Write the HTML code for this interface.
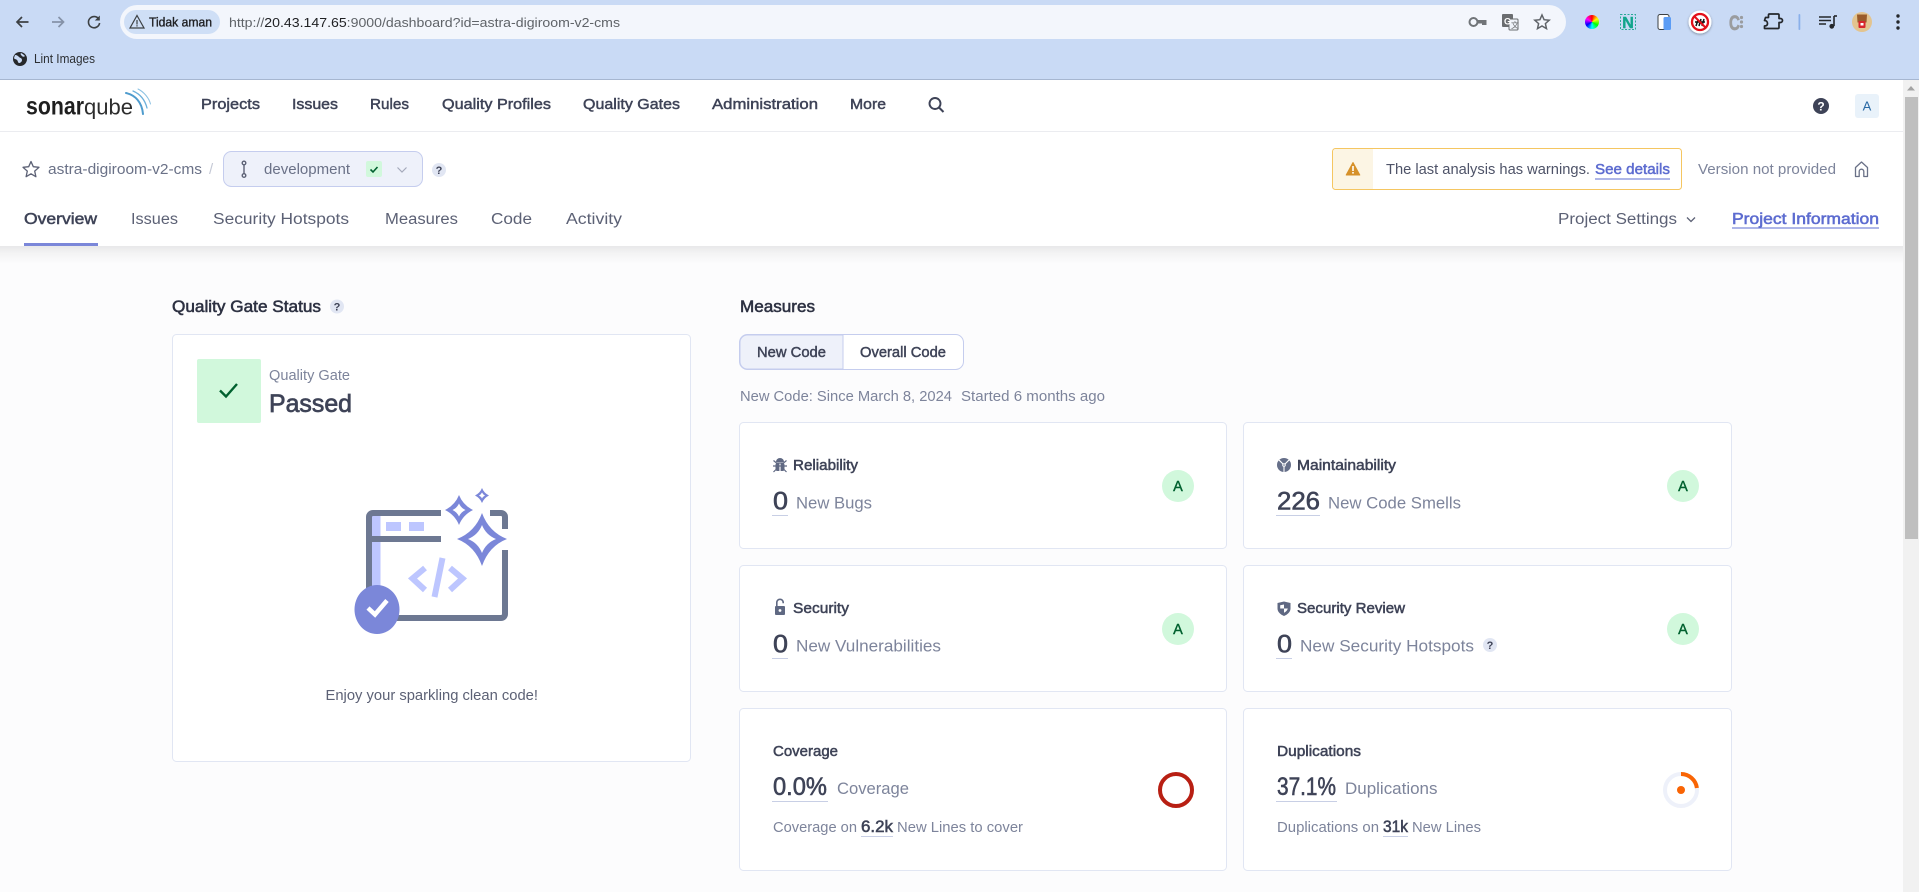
<!DOCTYPE html>
<html lang="en"><head><meta charset="utf-8"><title>astra-digiroom-v2-cms - SonarQube</title>
<style>
html,body{margin:0;padding:0;width:1919px;height:892px;overflow:hidden;background:#fcfcfd}
svg{position:absolute;left:0;top:0;display:block}
text{font-family:"Liberation Sans",sans-serif;white-space:pre}
.b{font-weight:700}
.n{font-size:14.5px;fill:#3e4357;stroke:#3e4357;stroke-width:.45}
.g{font-size:14.5px;fill:#6a7187}
.l{font-size:14.5px;fill:#7d849b}
.tab{font-size:15.5px;fill:#5c6175}
.t{font-size:14.5px;fill:#3e4357;stroke:#3e4357;stroke-width:.5}
.big{font-size:25px;fill:#3e4357;stroke:#3e4357;stroke-width:.6}
.sub{font-size:16.5px;fill:#7d849b}
.h{font-size:16.5px;fill:#2d3142;stroke:#2d3142;stroke-width:.55}
.q{font-size:11px;font-weight:700;fill:#3e4357;text-anchor:middle}
.chrome{font-size:13px;fill:#5f6368}
#wheel{position:absolute;left:1585px;top:15px;width:14px;height:14px;border-radius:50%;background:conic-gradient(#f00,#ff0,#0f0,#0ff,#00f,#f0f,#f00)}
</style></head><body>
<svg width="1919" height="892" viewBox="0 0 1919 892" xmlns="http://www.w3.org/2000/svg">
<defs><linearGradient id="sh" x1="0" y1="0" x2="0" y2="1"><stop offset="0" stop-color="#000" stop-opacity=".08"/><stop offset=".4" stop-color="#000" stop-opacity=".035"/><stop offset="1" stop-color="#000" stop-opacity="0"/></linearGradient>
<filter id="ds" x="-30%" y="-30%" width="160%" height="160%"><feDropShadow dx="0" dy="1" stdDeviation="1.2" flood-opacity=".35"/></filter></defs>

<!-- Browser chrome -->
<rect width="1919" height="79" fill="#c9daf5"/>
<rect y="79" width="1919" height="1" fill="#a6b6d0"/>
<rect x="120" y="5" width="1446" height="34" rx="17" fill="#f3f6fc"/>
<rect x="124" y="10" width="96" height="24" rx="12" fill="#cfdff6"/>
<g fill="none" stroke="#3c4043" stroke-width="1.7">
<path d="M28.5 22H17M22 17l-5 5 5 5"/>
<path d="M52 22h11.5M58.500 17l5 5-5 5" stroke="#8592a8"/>
<path d="M99 19.500a5.600 5.600 0 1 0 .6 3.500" stroke-width="1.600"/>
</g>
<path d="M99.800 15.500v5h-5z" fill="#3c4043"/>
<path d="M137 15.500l7 12.500h-14z" fill="none" stroke="#3c4043" stroke-width="1.200"/>
<rect x="136.400" y="20" width="1.200" height="4.500" fill="#3c4043"/><rect x="136.400" y="25.200" width="1.200" height="1.300" fill="#3c4043"/>
<text x="149" y="26.500" font-size="12.500" textLength="63" lengthAdjust="spacingAndGlyphs" fill="#202124" stroke="#202124" stroke-width=".35">Tidak aman</text>
<text x="229" y="27" class="chrome" textLength="391" lengthAdjust="spacingAndGlyphs">http://<tspan fill="#202124">20.43.147.65</tspan>:9000/dashboard?id=astra-digiroom-v2-cms</text>
<circle cx="20" cy="59" r="7" fill="#26282b"/>
<path d="M15 55c2 0 3 1 4 2s3 1 3 3-2 3-3 3-1-2-2-3-3-1-3-2zM21 53c2 1 3 2 4 3-1 1-2 1-3 0s-2-2-1-3z" fill="#c9daf5"/>
<text x="34" y="63" font-size="12.500" textLength="61" lengthAdjust="spacingAndGlyphs" fill="#2c2f33">Lint Images</text>

<!-- Extension icons -->
<circle cx="1473.500" cy="22" r="4" fill="none" stroke="#707478" stroke-width="2"/>
<rect x="1477.500" y="20" width="9" height="3.500" fill="#707478"/><rect x="1482" y="22" width="4.500" height="3" fill="#707478"/>
<rect x="1502" y="14" width="11" height="13" rx="1" fill="#6a6d70"/>
<rect x="1509" y="19" width="9" height="11" rx="1" fill="#eef2f9" stroke="#6a6d70"/>
<text x="1504" y="24.500" font-size="9" font-weight="700" fill="#fff">G</text>
<text x="1511" y="28" font-size="8" fill="#6a6d70">文</text>
<path d="M1542 15l2.100 4.700 5.100.5-3.800 3.400 1.100 5-4.500-2.600-4.500 2.600 1.100-5-3.800-3.400 5.100-.5z" fill="none" stroke="#5f6368" stroke-width="1.500"/>
<rect x="1620.500" y="14.500" width="15" height="15" fill="none" stroke="#2aa998" stroke-dasharray="2 1.500"/>
<text x="1628" y="28" font-size="16" font-weight="700" fill="#12a58c" stroke="#12a58c" stroke-width=".4" text-anchor="middle">N</text>
<rect x="1658" y="14.500" width="11" height="15" rx="2" fill="#fdfdfe" stroke="#3c4043"/>
<rect x="1663.500" y="17" width="7.500" height="13" rx="1.500" fill="#5b9cf5"/>
<circle cx="1700" cy="22" r="11.500" fill="#fff" filter="url(#ds)"/>
<path d="M1696 26l2-6M1699 26l2-7M1702 26l2-7M1695 22h10" fill="none" stroke="#111" stroke-width="1.500"/>
<circle cx="1700" cy="22" r="8" fill="none" stroke="#e3101a" stroke-width="2.300"/>
<path d="M1694.500 16.500l11 11" stroke="#e3101a" stroke-width="2"/>
<text x="1729" y="30" font-size="21" font-weight="700" fill="#9a9c9f" stroke="#9a9c9f" stroke-width=".7" textLength="11" lengthAdjust="spacingAndGlyphs">C</text>
<circle cx="1741.500" cy="17.500" r="1.600" fill="#9a9c9f"/><circle cx="1741.500" cy="22" r="1.600" fill="#9a9c9f"/><circle cx="1741.500" cy="26.500" r="1.600" fill="#9a9c9f"/>
<path d="M1767 18h3v-2.500a1 1 0 0 1 1-1h8.500a1 1 0 0 1 1 1V19h1.500a2 2 0 0 1 0 4h-1.500v5a1 1 0 0 1-1 1h-13.500v-2.500c2 0 3-1 3-2.500s-1-3-3-3z" transform="translate(-1.500 -.5)" fill="none" stroke="#24272b" stroke-width="1.700" stroke-linejoin="round"/>
<rect x="1798.500" y="14" width="1.800" height="16" rx=".9" fill="#8ab0ea"/>
<path d="M1819 17h12M1819 20.500h12M1819 24h7" stroke="#24272b" stroke-width="1.500"/>
<path d="M1834 16v10" stroke="#24272b" stroke-width="1.600"/><circle cx="1831.800" cy="26.300" r="2.400" fill="#24272b"/><path d="M1834 16h3" stroke="#24272b" stroke-width="1.600"/>
<circle cx="1862" cy="22" r="10" fill="#e3c48f"/>
<path d="M1857 14.500h10l-.5 8h-9z" fill="#9a5b2a"/><rect x="1858.500" y="21" width="7" height="7" rx="1" fill="#d7262c"/><rect x="1860.500" y="23" width="3" height="2.500" fill="#fff"/>
<circle cx="1898" cy="16" r="1.700" fill="#24272b"/><circle cx="1898" cy="22" r="1.700" fill="#24272b"/><circle cx="1898" cy="28" r="1.700" fill="#24272b"/>

<!-- Shadowed page header -->
<rect y="246" width="1904" height="18" fill="url(#sh)"/>
<rect y="80" width="1904" height="166" fill="#fff"/>
<rect y="131" width="1904" height="1" fill="#ebecf0"/>

<!-- Logo -->
<text x="26" y="114.500" font-size="25" font-weight="700" fill="#1f1f1f" textLength="58" lengthAdjust="spacingAndGlyphs">sonar</text>
<text x="84" y="114.500" font-size="22.500" fill="#2d2d2d" textLength="49" lengthAdjust="spacingAndGlyphs">qube</text>
<g fill="none" stroke-linecap="round">
<path d="M126 93c9 2 16 9 17 21" stroke="#4e9bcd" stroke-width="2"/>
<path d="M133 91c7 3 12 9 14 17" stroke="#6cb0db" stroke-width="1.300"/>
<path d="M138 89c6 3 11 9 12.500 15" stroke="#8cc2e3" stroke-width="1"/>
</g>

<!-- Global nav -->
<text x="201" y="109" class="n" textLength="59" lengthAdjust="spacingAndGlyphs">Projects</text>
<text x="292" y="109" class="n" textLength="46" lengthAdjust="spacingAndGlyphs">Issues</text>
<text x="370" y="109" class="n" textLength="39" lengthAdjust="spacingAndGlyphs">Rules</text>
<text x="442" y="109" class="n" textLength="109" lengthAdjust="spacingAndGlyphs">Quality Profiles</text>
<text x="583" y="109" class="n" textLength="97" lengthAdjust="spacingAndGlyphs">Quality Gates</text>
<text x="712" y="109" class="n" textLength="106" lengthAdjust="spacingAndGlyphs">Administration</text>
<text x="850" y="109" class="n" textLength="36" lengthAdjust="spacingAndGlyphs">More</text>
<circle cx="935" cy="103.500" r="5.500" fill="none" stroke="#3e4357" stroke-width="1.900"/>
<path d="M939 107.500l4.500 4.500" stroke="#3e4357" stroke-width="2"/>
<circle cx="1821" cy="106" r="8" fill="#3e4357"/>
<text x="1821" y="110.500" font-size="12" font-weight="700" fill="#fff" text-anchor="middle">?</text>
<rect x="1855" y="94" width="24" height="24" rx="3" fill="#e9f2fa"/>
<text x="1867" y="110.500" font-size="13" fill="#2a6aa5" text-anchor="middle">A</text>

<!-- Breadcrumb -->
<path d="M31 161.500l2.300 5.200 5.700.6-4.300 3.800 1.200 5.600-4.900-2.900-4.900 2.900 1.200-5.600-4.300-3.800 5.700-.6z" fill="none" stroke="#5c6175" stroke-width="1.300" stroke-linejoin="round"/>
<text x="48" y="174" class="g" textLength="154" lengthAdjust="spacingAndGlyphs">astra-digiroom-v2-cms</text>
<text x="209" y="174" font-size="15" fill="#c5c9d6">/</text>
<rect x="223.500" y="151.500" width="199" height="35" rx="8" fill="#eef1fa" stroke="#c5cdee"/>
<g fill="none" stroke="#5c6175" stroke-width="1.400"><circle cx="244" cy="163" r="1.800"/><circle cx="244" cy="175.500" r="1.800"/><path d="M244 165v8.700"/></g>
<text x="264" y="174" class="g" textLength="86" lengthAdjust="spacingAndGlyphs">development</text>
<rect x="366" y="161" width="16" height="16" rx="2" fill="#d1f8dc"/>
<path d="M370.500 169.500l2.500 2.500 4.500-5" fill="none" stroke="#00612f" stroke-width="1.600"/>
<path d="M397.500 167.500l4.500 4.500 4.500-4.500" fill="none" stroke="#a4a9ba" stroke-width="1.200"/>
<circle cx="439" cy="170" r="7" fill="#e1e6f3"/><text x="439" y="174" class="q">?</text>

<!-- Tabs -->
<text x="24" y="224" class="tab" style="fill:#3e4357;stroke:#3e4357;stroke-width:.5" textLength="73" lengthAdjust="spacingAndGlyphs">Overview</text>
<text x="131" y="224" class="tab" textLength="47" lengthAdjust="spacingAndGlyphs">Issues</text>
<text x="213" y="224" class="tab" textLength="136" lengthAdjust="spacingAndGlyphs">Security Hotspots</text>
<text x="385" y="224" class="tab" textLength="73" lengthAdjust="spacingAndGlyphs">Measures</text>
<text x="491" y="224" class="tab" textLength="41" lengthAdjust="spacingAndGlyphs">Code</text>
<text x="566" y="224" class="tab" textLength="56" lengthAdjust="spacingAndGlyphs">Activity</text>
<rect x="24" y="243" width="74" height="3" fill="#7b87d9"/>

<!-- Warning -->
<rect x="1332.500" y="148.500" width="349" height="41" rx="3" fill="#fff" stroke="#f5c661"/>
<path d="M1333 152a3 3 0 0 1 3-3h37v40h-37a3 3 0 0 1-3-3z" fill="#fcf5e4"/>
<path d="M1353 162.500l6.800 12.500h-13.600z" fill="#d6912a" stroke="#d6912a" stroke-linejoin="round"/>
<rect x="1352.200" y="166" width="1.600" height="5" fill="#fff"/><rect x="1352.200" y="172" width="1.600" height="1.600" fill="#fff"/>
<text x="1386" y="174" font-size="14.500" fill="#4e5368" textLength="204" lengthAdjust="spacingAndGlyphs">The last analysis has warnings.</text>
<text x="1595" y="174" font-size="14.500" fill="#5d6cd0" stroke="#5d6cd0" stroke-width=".5" textLength="75" lengthAdjust="spacingAndGlyphs">See details</text>
<rect x="1595" y="178.500" width="75" height="1" fill="#5d6cd0"/>
<text x="1698" y="174" class="l" textLength="138" lengthAdjust="spacingAndGlyphs">Version not provided</text>
<path d="M1855.500 176.500v-9l6-5.500 6 5.500v9h-3.700v-5a2.300 2.300 0 0 0-4.600 0v5z" fill="none" stroke="#6a7187" stroke-width="1.300" stroke-linejoin="round"/>
<text x="1558" y="224" class="tab" textLength="119" lengthAdjust="spacingAndGlyphs">Project Settings</text>
<path d="M1687 217.500l4 4 4-4" fill="none" stroke="#5c6175" stroke-width="1.300"/>
<text x="1732" y="224" font-size="15.500" fill="#5d6cd0" stroke="#5d6cd0" stroke-width=".55" textLength="147" lengthAdjust="spacingAndGlyphs">Project Information</text>
<rect x="1732" y="227.500" width="147" height="1" fill="#5d6cd0"/>

<!-- Quality gate -->
<text x="172" y="312" class="h" textLength="149" lengthAdjust="spacingAndGlyphs">Quality Gate Status</text>
<circle cx="337" cy="306.500" r="7" fill="#e1e6f3"/><text x="337" y="310.500" class="q">?</text>
<rect x="172.500" y="334.500" width="518" height="427" rx="4" fill="#fff" stroke="#e1e6f3"/>
<rect x="197" y="359" width="64" height="64" rx="2" fill="#d1f8dc"/>
<path d="M220 390.500l6 6 11-12.500" fill="none" stroke="#00612f" stroke-width="2.400"/>
<text x="269" y="380" class="l" textLength="81" lengthAdjust="spacingAndGlyphs">Quality Gate</text>
<text x="269" y="412" font-size="25" fill="#3e4357" stroke="#3e4357" stroke-width=".7" textLength="83" lengthAdjust="spacingAndGlyphs">Passed</text>

<!-- Illustration -->
<g>
<rect x="372" y="516" width="8.500" height="76" fill="#bdc6ff"/>
<path d="M441 513H373a4 4 0 0 0-4 4v76" fill="none" stroke="#6d7892" stroke-width="6"/>
<path d="M369 539h72" fill="none" stroke="#6d7892" stroke-width="6"/>
<path d="M490 513h11a4 4 0 0 1 4 4v12M505 550v64a4 4 0 0 1-4 4H395" fill="none" stroke="#6d7892" stroke-width="6"/>
<rect x="386" y="522" width="15" height="9" fill="#bdc6ff"/><rect x="409" y="522" width="15" height="9" fill="#bdc6ff"/>
<path d="M425 568l-12.500 10.500L425 590M450 568l12.500 10.500L450 590M442.500 558l-8 39" fill="none" stroke="#bdc6ff" stroke-width="6"/>
<path fill="#7b87d9" fill-rule="evenodd" d="M482 513Q489 532 507 539Q489 546 482 566Q475 546 457 539Q475 532 482 513ZM482 525Q486 535 496 539Q486 543 482 553Q478 543 468 539Q478 535 482 525Z"/>
<path fill="#7b87d9" fill-rule="evenodd" d="M459 495Q463 505 473 510Q463 515 459 525Q455 515 445 510Q455 505 459 495ZM459 503.500Q461 508 465.500 510Q461 512 459 516.500Q457 512 452.500 510Q457 508 459 503.500Z"/>
<path fill="#7b87d9" fill-rule="evenodd" d="M482 488Q484 493 489 495.500Q484 498 482 503Q480 498 475 495.500Q480 493 482 488ZM482 492.500Q483 494.500 485 495.500Q483 496.500 482 498.500Q481 496.500 479 495.500Q481 494.500 482 492.500Z"/>
<ellipse cx="377" cy="609.500" rx="22.500" ry="24.500" fill="#7b87d9"/>
<path d="M368 608l7 6.500 12-14" fill="none" stroke="#fff" stroke-width="4.500"/>
</g>
<text x="325.500" y="700" font-size="14.500" fill="#5c6175" textLength="212.500" lengthAdjust="spacingAndGlyphs">Enjoy your sparkling clean code!</text>

<!-- Measures -->
<text x="740" y="312" class="h" textLength="75" lengthAdjust="spacingAndGlyphs">Measures</text>
<rect x="739.500" y="334.500" width="224" height="35" rx="8" fill="#fff" stroke="#c5cdee"/>
<path d="M843 335v34H747.500a7.500 7.500 0 0 1-7.500-7.500v-19a7.500 7.500 0 0 1 7.500-7.500z" fill="#eef1fa" stroke="#c5cdee"/>
<text x="757" y="357" class="n" textLength="69" lengthAdjust="spacingAndGlyphs">New Code</text>
<text x="860" y="357" class="n" textLength="86" lengthAdjust="spacingAndGlyphs">Overall Code</text>
<text x="740" y="401" class="l" textLength="212" lengthAdjust="spacingAndGlyphs">New Code: Since March 8, 2024</text>
<text x="961" y="401" class="l" textLength="144" lengthAdjust="spacingAndGlyphs">Started 6 months ago</text>

<!-- Cards -->
<g fill="#fff" stroke="#e1e6f3">
<rect x="739.500" y="422.500" width="487" height="126" rx="4"/>
<rect x="1243.500" y="422.500" width="488" height="126" rx="4"/>
<rect x="739.500" y="565.500" width="487" height="126" rx="4"/>
<rect x="1243.500" y="565.500" width="488" height="126" rx="4"/>
<rect x="739.500" y="708.500" width="487" height="162" rx="4"/>
<rect x="1243.500" y="708.500" width="488" height="162" rx="4"/>
</g>

<!-- Reliability -->
<g fill="#5f6882"><path d="M776 462a4 4 0 0 1 8 0z"/><rect x="775.500" y="463" width="9" height="8" rx="2"/><rect x="779.400" y="463" width="1.200" height="8.500" fill="#fff"/></g>
<path d="M773.500 460.500l3 2.500h7l3-2.500M773 466h14M773.500 472l2.500-2.500M786.500 472l-2.500-2.500" fill="none" stroke="#5f6882" stroke-width="1.200"/>
<text x="793" y="470" class="t" textLength="65" lengthAdjust="spacingAndGlyphs">Reliability</text>
<text x="773" y="509.500" class="big" textLength="15" lengthAdjust="spacingAndGlyphs">0</text>
<text x="796" y="508.500" class="sub" textLength="76" lengthAdjust="spacingAndGlyphs">New Bugs</text>
<rect x="772" y="515" width="16" height="1" fill="#c8cfe5"/>
<circle cx="1178" cy="486" r="16" fill="#d1f8dc"/><text x="1178" y="491" font-size="14.500" fill="#00612f" stroke="#00612f" stroke-width=".4" text-anchor="middle">A</text>

<!-- Maintainability -->
<circle cx="1284" cy="465" r="7" fill="#666f89"/>
<path d="M1284 465l-5.200-5.200M1284 465l5.200-5.200M1284 465v7" stroke="#fff" stroke-width="1.100"/>
<circle cx="1284" cy="465" r="1.800" fill="#fff"/><circle cx="1284" cy="465" r=".8" fill="#666f89"/>
<text x="1297" y="470" class="t" textLength="99" lengthAdjust="spacingAndGlyphs">Maintainability</text>
<text x="1277" y="509.500" class="big" textLength="43" lengthAdjust="spacingAndGlyphs">226</text>
<text x="1328" y="508.500" class="sub" textLength="133" lengthAdjust="spacingAndGlyphs">New Code Smells</text>
<rect x="1276" y="515" width="44" height="1" fill="#c8cfe5"/>
<circle cx="1683" cy="486" r="16" fill="#d1f8dc"/><text x="1683" y="491" font-size="14.500" fill="#00612f" stroke="#00612f" stroke-width=".4" text-anchor="middle">A</text>

<!-- Security -->
<rect x="775" y="606" width="10" height="9" rx="1" fill="#5f6882"/>
<path d="M776.800 606v-3.500a3.200 3.200 0 0 1 6.400 0v.8" fill="none" stroke="#5f6882" stroke-width="1.600"/>
<circle cx="780" cy="610.500" r="1.400" fill="#fff"/>
<text x="793" y="613" class="t" textLength="56" lengthAdjust="spacingAndGlyphs">Security</text>
<text x="773" y="652.500" class="big" textLength="15" lengthAdjust="spacingAndGlyphs">0</text>
<text x="796" y="651.500" class="sub" textLength="145" lengthAdjust="spacingAndGlyphs">New Vulnerabilities</text>
<rect x="772" y="658" width="16" height="1" fill="#c8cfe5"/>
<circle cx="1178" cy="629" r="16" fill="#d1f8dc"/><text x="1178" y="634" font-size="14.500" fill="#00612f" stroke="#00612f" stroke-width=".4" text-anchor="middle">A</text>

<!-- Security Review -->
<path d="M1284 601.500l6.500 1.500v5.500c0 3.500-3 6-6.500 7.500-3.500-1.500-6.500-4-6.500-7.500V603z" fill="#5f6882"/>
<path d="M1284 604.500v4h-3.800v-3.300zM1284 608.500h3.800c-.4 2-2 3.400-3.800 4.300z" fill="#fff"/>
<text x="1297" y="613" class="t" textLength="108" lengthAdjust="spacingAndGlyphs">Security Review</text>
<text x="1277" y="652.500" class="big" textLength="15" lengthAdjust="spacingAndGlyphs">0</text>
<text x="1300" y="651.500" class="sub" textLength="174" lengthAdjust="spacingAndGlyphs">New Security Hotspots</text>
<circle cx="1490" cy="645" r="7" fill="#e1e6f3"/><text x="1490" y="649" class="q">?</text>
<rect x="1276" y="658" width="16" height="1" fill="#c8cfe5"/>
<circle cx="1683" cy="629" r="16" fill="#d1f8dc"/><text x="1683" y="634" font-size="14.500" fill="#00612f" stroke="#00612f" stroke-width=".4" text-anchor="middle">A</text>

<!-- Coverage -->
<text x="773" y="756" class="t" textLength="65" lengthAdjust="spacingAndGlyphs">Coverage</text>
<text x="773" y="795" class="big" textLength="54" lengthAdjust="spacingAndGlyphs">0.0%</text>
<text x="837" y="794" class="sub" textLength="72" lengthAdjust="spacingAndGlyphs">Coverage</text>
<rect x="772" y="801" width="56" height="1" fill="#c8cfe5"/>
<text x="773" y="832" class="l" textLength="84" lengthAdjust="spacingAndGlyphs">Coverage on</text>
<text x="861" y="832" font-size="16.500" fill="#3e4357" stroke="#3e4357" stroke-width=".55" textLength="32" lengthAdjust="spacingAndGlyphs">6.2k</text>
<rect x="861" y="836" width="32" height="1" fill="#c8cfe5"/>
<text x="897" y="832" class="l" textLength="126" lengthAdjust="spacingAndGlyphs">New Lines to cover</text>
<circle cx="1176" cy="790" r="16" fill="none" stroke="#b81f13" stroke-width="4"/>

<!-- Duplications -->
<text x="1277" y="756" class="t" textLength="84" lengthAdjust="spacingAndGlyphs">Duplications</text>
<text x="1277" y="795" class="big" textLength="59" lengthAdjust="spacingAndGlyphs">37.1%</text>
<text x="1345" y="794" class="sub" textLength="92.500" lengthAdjust="spacingAndGlyphs">Duplications</text>
<rect x="1276" y="801" width="61" height="1" fill="#c8cfe5"/>
<text x="1277" y="832" class="l" textLength="102" lengthAdjust="spacingAndGlyphs">Duplications on</text>
<text x="1383" y="832" font-size="16.500" fill="#3e4357" stroke="#3e4357" stroke-width=".55" textLength="25" lengthAdjust="spacingAndGlyphs">31k</text>
<rect x="1383" y="836" width="25" height="1" fill="#c8cfe5"/>
<text x="1412" y="832" class="l" textLength="69" lengthAdjust="spacingAndGlyphs">New Lines</text>
<circle cx="1681" cy="790" r="16" fill="none" stroke="#eef1fa" stroke-width="4"/>
<path d="M1681 774a16 16 0 0 1 15.900 14" fill="none" stroke="#f96404" stroke-width="4"/>
<circle cx="1681" cy="790" r="4" fill="#f96404"/>

<!-- Scrollbar -->
<rect x="1903" y="80" width="16" height="812" fill="#f1f1f1"/>
<path d="M1911 86l4 4.500h-8z" fill="#a3a3a3"/>
<rect x="1905" y="97" width="13" height="442" fill="#bfbfbf"/>
</svg>
<div id="wheel"></div>
</body></html>
